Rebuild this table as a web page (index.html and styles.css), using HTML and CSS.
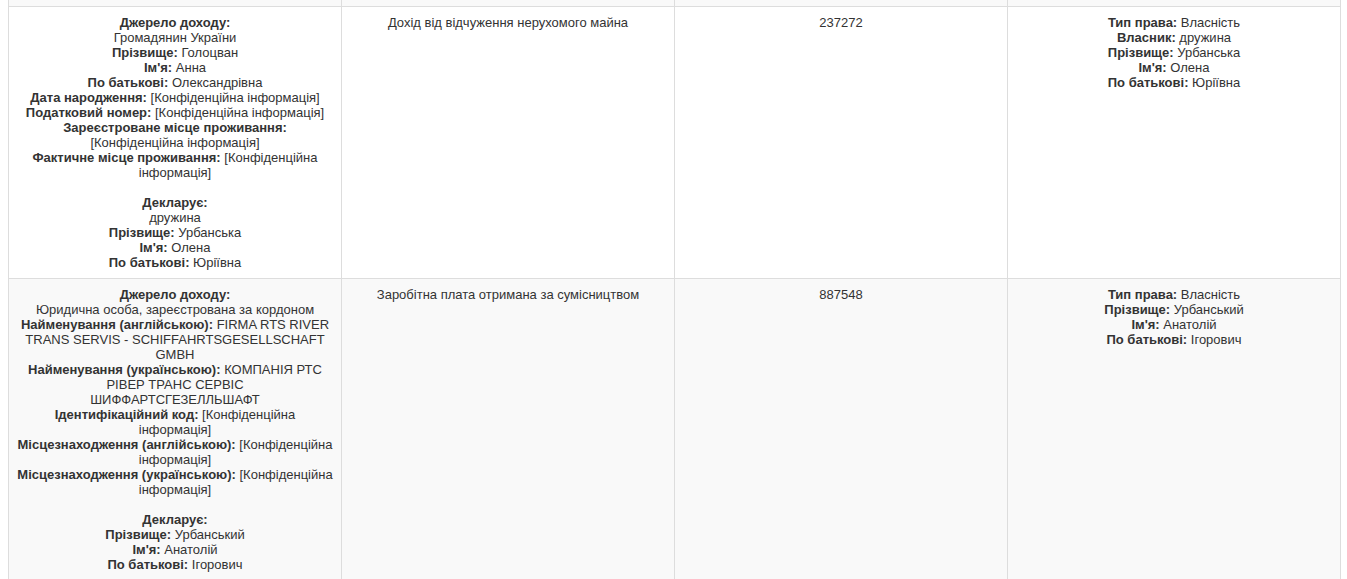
FILE: index.html
```html
<!DOCTYPE html>
<html lang="uk">
<head>
    <meta charset="UTF-8">
    <meta name="viewport" content="width=device-width, initial-scale=1.0">
    <title>Доходи</title>
    <link rel="stylesheet" href="styles.css">
</head>
<body>
    <div class="container">
        <table class="income-table">
            <tr class="tail-row">
                <td></td><td></td><td></td><td></td>
            </tr>

            <!-- Row: wife -->
            <tr>
                <td>
                    <strong>Джерело доходу:</strong><br>
                    Громадянин України<br>
                    <strong>Прізвище:</strong> Голоцван<br>
                    <strong>Ім'я:</strong> Анна<br>
                    <strong>По батькові:</strong> Олександрівна<br>
                    <strong>Дата народження:</strong> [Конфіденційна інформація]<br>
                    <strong>Податковий номер:</strong> [Конфіденційна інформація]<br>
                    <strong>Зареєстроване місце проживання:</strong> [Конфіденційна інформація]<br>
                    <strong>Фактичне місце проживання:</strong> [Конфіденційна інформація]<br>
                    <br>
                    <strong>Декларує:</strong><br>
                    дружина<br>
                    <strong>Прізвище:</strong> Урбанська<br>
                    <strong>Ім'я:</strong> Олена<br>
                    <strong>По батькові:</strong> Юріївна
                </td>
                <td>Дохід від відчуження нерухомого майна</td>
                <td>237272</td>
                <td>
                    <strong>Тип права:</strong> Власність<br>
                    <strong>Власник:</strong> дружина<br>
                    <strong>Прізвище:</strong> Урбанська<br>
                    <strong>Ім'я:</strong> Олена<br>
                    <strong>По батькові:</strong> Юріївна
                </td>
            </tr>

            <!-- Row: declarant -->
            <tr>
                <td>
                    <strong>Джерело доходу:</strong><br>
                    Юридична особа, зареєстрована за кордоном<br>
                    <strong>Найменування (англійською):</strong> FIRMA RTS RIVER TRANS SERVIS - SCHIFFAHRTSGESELLSCHAFT GMBH<br>
                    <strong>Найменування (українською):</strong> КОМПАНІЯ РТС РІВЕР ТРАНС СЕРВІС<br>
                    ШИФФАРТСГЕЗЕЛЛЬШАФТ<br>
                    <strong>Ідентифікаційний код:</strong> [Конфіденційна інформація]<br>
                    <strong>Місцезнаходження (англійською):</strong> [Конфіденційна інформація]<br>
                    <strong>Місцезнаходження (українською):</strong> [Конфіденційна інформація]<br>
                    <br>
                    <strong>Декларує:</strong><br>
                    <strong>Прізвище:</strong> Урбанський<br>
                    <strong>Ім'я:</strong> Анатолій<br>
                    <strong>По батькові:</strong> Ігорович
                </td>
                <td>Заробітна плата отримана за сумісництвом</td>
                <td>887548</td>
                <td>
                    <strong>Тип права:</strong> Власність<br>
                    <strong>Прізвище:</strong> Урбанський<br>
                    <strong>Ім'я:</strong> Анатолій<br>
                    <strong>По батькові:</strong> Ігорович
                </td>
            </tr>
        </table>
    </div>
</body>
</html>
```

FILE: styles.css
```css
/* Global Styles */
body {
    margin: 0;
    font-family: 'Liberation Sans', Arial, sans-serif;
    font-size: 13px;
    line-height: 15px;
    color: #333333;
    background-color: #ffffff;
}

.container {
    padding: 0 6px 0 8px;
}

/* Income Table */
.income-table {
    width: 1333px;
    border-collapse: collapse;
    table-layout: fixed;
}

.income-table td {
    width: 25%;
    padding: 8px;
    border: 1px solid #dddddd;
    text-align: center;
    vertical-align: top;
}

.income-table tr:nth-child(odd) td {
    background-color: #f9f9f9;
}

.income-table strong {
    font-weight: bold;
}

/* bottom of the row above, scrolled out of view */
.income-table .tail-row td {
    padding: 0;
    height: 6px;
    border-top: none;
}
```
